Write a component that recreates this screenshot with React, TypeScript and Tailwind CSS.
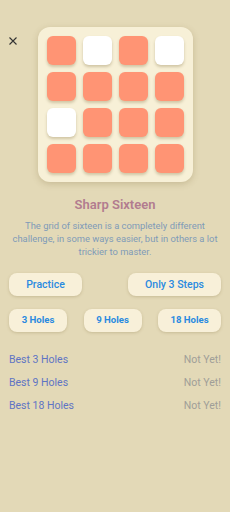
const grid = [
  [1, 0, 1, 0],
  [1, 1, 1, 1],
  [0, 1, 1, 1],
  [1, 1, 1, 1],
];

const holes = [
  { label: "3 Holes", w: "w-[58px]" },
  { label: "9 Holes", w: "w-[58px]" },
  { label: "18 Holes", w: "w-[63px]" },
];

const bests = ["Best 3 Holes", "Best 9 Holes", "Best 18 Holes"];

export default function App() {
  return (
    <div
      className="relative h-[512px] w-[230px] overflow-hidden bg-[#e3d9b7]"
      style={{ fontFamily: "Roboto, 'Noto Sans', sans-serif" }}
    >
      <button type="button" className="absolute left-[8px] top-[36px] text-[#333]">
        <svg width="10" height="10" viewBox="0 0 10 10" fill="none" stroke="currentColor" strokeWidth="1.1">
          <path d="M1.5 1.5 L8.5 8.5 M8.5 1.5 L1.5 8.5" />
        </svg>
      </button>

      <div className="flex flex-col items-center pt-[27px]">
        <div className="grid grid-cols-4 gap-[7px] rounded-[12px] bg-[#f7f0d7] p-[9px] shadow-[0_2px_6px_rgba(120,100,50,0.25)]">
          {grid.flat().map((on, i) => (
            <div
              key={i}
              className={`h-[29px] w-[29px] rounded-[6px] shadow-[0_2px_3px_rgba(120,100,50,0.3)] ${
                on ? "bg-[#ff9474]" : "bg-white"
              }`}
            />
          ))}
        </div>

        <h1 className="mt-[14px] text-[13px] font-semibold leading-[18px] text-[#b27c8f]">Sharp Sixteen</h1>
        <p className="mt-[5px] px-[10px] text-center text-[9.4px] leading-[13px] text-[#809bb8]">
          The grid of sixteen is a completely different challenge, in some ways easier, but in others a lot
          trickier to master.
        </p>
      </div>

      <div className="mt-[15px] flex justify-between px-[9px]">
        <button className="h-[23px] w-[73px] rounded-[8px] bg-[#f8f0d9] text-[10.5px] font-medium text-[#2a8ae0] shadow-[0_1px_3px_rgba(120,100,50,0.25)]">
          Practice
        </button>
        <button className="h-[23px] w-[93px] rounded-[8px] bg-[#f8f0d9] text-[10.5px] font-medium text-[#2a8ae0] shadow-[0_1px_3px_rgba(120,100,50,0.25)]">
          Only 3 Steps
        </button>
      </div>

      <div className="mt-[13px] flex justify-between px-[9px]">
        {holes.map((h) => (
          <button
            key={h.label}
            className={`h-[23px] ${h.w} rounded-[8px] bg-[#f8f0d9] text-[9.6px] font-bold text-[#2a8ae0] shadow-[0_1px_3px_rgba(120,100,50,0.25)]`}
          >
            {h.label}
          </button>
        ))}
      </div>

      <div className="mt-[21px] flex flex-col gap-[9px] px-[9px]">
        {bests.map((b) => (
          <div key={b} className="flex items-center justify-between text-[10.5px] leading-[14px]">
            <span className="text-[#5f74c4]">{b}</span>
            <span className="text-[#a09e98]">Not Yet!</span>
          </div>
        ))}
      </div>
    </div>
  );
}
